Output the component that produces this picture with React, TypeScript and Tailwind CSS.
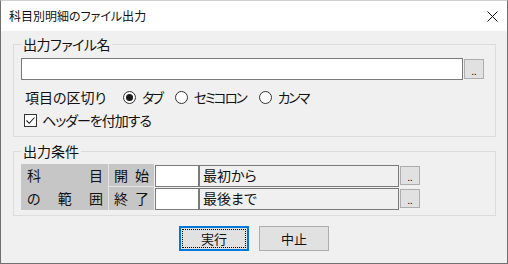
import React from "react";

// 科目別明細のファイル出力 — Windows 風ダイアログ
const jp = "font-['Noto_Sans_CJK_JP','Noto_Sans',sans-serif] [font-feature-settings:'palt']";

function Radio({ checked, label }: { checked?: boolean; label: string }) {
  return (
    <label className="flex items-center gap-[6px]">
      <span className="w-[13px] h-[13px] rounded-full border border-[#333333] bg-white flex items-center justify-center">
        {checked && <span className="w-[7px] h-[7px] rounded-full bg-[#1a1a1a]" />}
      </span>
      <span className="tracking-[-2px]">{label}</span>
    </label>
  );
}

function Browse({ className = "" }: { className?: string }) {
  return (
    <button className={`w-[20px] h-[19px] bg-[#e1e1e1] border border-[#adadad] flex items-end justify-center text-[9px] leading-[10px] pb-[1px] ${className}`}>
      ..
    </button>
  );
}

function RangeRow({ a, b, value, first }: { a: string; b: string; value: string; first?: boolean }) {
  return (
    <div className="flex items-center h-[23px]">
      <div className={`w-[45px] h-[23px] bg-[#c6c6c6] flex items-center justify-between px-[5px] ${first ? "border-b border-[#e4e4e4]" : ""}`}>
        <span>{a}</span>
        <span>{b}</span>
      </div>
      <input className="w-[44px] h-[22px] ml-[1px] bg-white border border-[#7a7a7a] outline-none" />
      <div className="w-[200px] h-[22px] bg-[#f0f0f0] border border-[#7a7a7a] flex items-center pl-[3px]">{value}</div>
      <Browse className="ml-[1px]" />
    </div>
  );
}

export default function App() {
  return (
    <div className={`w-[508px] h-[264px] flex flex-col border-x border-b border-t border-x-[#707070] border-b-[#707070] border-t-[#d0d0d0] bg-[#f0f0f0] text-[#111111] ${jp}`}>
      <div className="h-[30px] bg-white flex items-center justify-between shrink-0">
        <span className="pl-[8px] text-[12px]">科目別明細のファイル出力</span>
        <span className="w-[30px] h-[30px] flex items-center justify-center">
          <svg width="11" height="11" viewBox="0 0 11 11">
            <path d="M0.5 0.5 L10.5 10.5 M10.5 0.5 L0.5 10.5" stroke="#111" strokeWidth="1" />
          </svg>
        </span>
      </div>

      <div className="flex-1 flex flex-col pt-[5px] text-[14px]">
        <fieldset className="ml-[12px] w-[483px] border border-[#dcdcdc] px-[7px] pb-[7px]">
          <legend className="px-[2px] leading-[16px] tracking-[-0.5px]">出力ファイル名</legend>
          <div className="flex items-start mt-[6px]">
            <input className="w-[442px] h-[22px] bg-white border border-[#7a7a7a] outline-none" />
            <Browse className="ml-[1px] mt-[1px] h-[20px]" />
          </div>
          <div className="flex items-center h-[18px] mt-[8px] pl-[4px]">
            <span>項目の区切り</span>
            <div className="flex items-center gap-[13px] ml-[17px] text-[13.5px]">
              <Radio checked label="タブ" />
              <Radio label="セミコロン" />
              <Radio label="カンマ" />
            </div>
          </div>
          <label className="flex items-center gap-[5px] h-[18px] mt-[5px] pl-[3px]">
            <span className="w-[13px] h-[13px] border border-[#333333] bg-white flex items-center justify-center">
              <svg width="11" height="11" viewBox="0 0 11 11">
                <path d="M1.5 5.5 L4.2 8.3 L9.5 2.5" fill="none" stroke="#222" strokeWidth="1.1" />
              </svg>
            </span>
            <span className="tracking-[-1px]">ヘッダーを付加する</span>
          </label>
        </fieldset>

        <fieldset className="ml-[12px] mt-[6px] w-[483px] border border-[#dcdcdc] px-[7px] pb-[5px]">
          <legend className="px-[2px] leading-[16px]">出力条件</legend>
          <div className="flex mt-[5px]">
            <div className="w-[88px] h-[46px] bg-[#c6c6c6] border-r border-[#e4e4e4] flex flex-col">
              <div className="h-[23px] flex items-center justify-between pl-[6px] pr-[5px]">
                <span>科</span>
                <span>目</span>
              </div>
              <div className="h-[23px] flex items-center justify-between pl-[6px] pr-[5px]">
                <span>の</span>
                <span>範</span>
                <span>囲</span>
              </div>
            </div>
            <div className="flex flex-col">
              <RangeRow first a="開" b="始" value="最初から" />
              <RangeRow a="終" b="了" value="最後まで" />
            </div>
          </div>
        </fieldset>

        <div className="flex justify-center gap-[10px] mt-[10px] text-[13px]">
          <button className="w-[70px] h-[25px] border-2 border-[#0078d7] bg-[#e1e1e1] p-[1px]">
            <span className="w-full h-full border border-dotted border-black flex items-center justify-center">実行</span>
          </button>
          <button className="w-[70px] h-[25px] border border-[#adadad] bg-[#e1e1e1] flex items-center justify-center">中止</button>
        </div>
      </div>
    </div>
  );
}
